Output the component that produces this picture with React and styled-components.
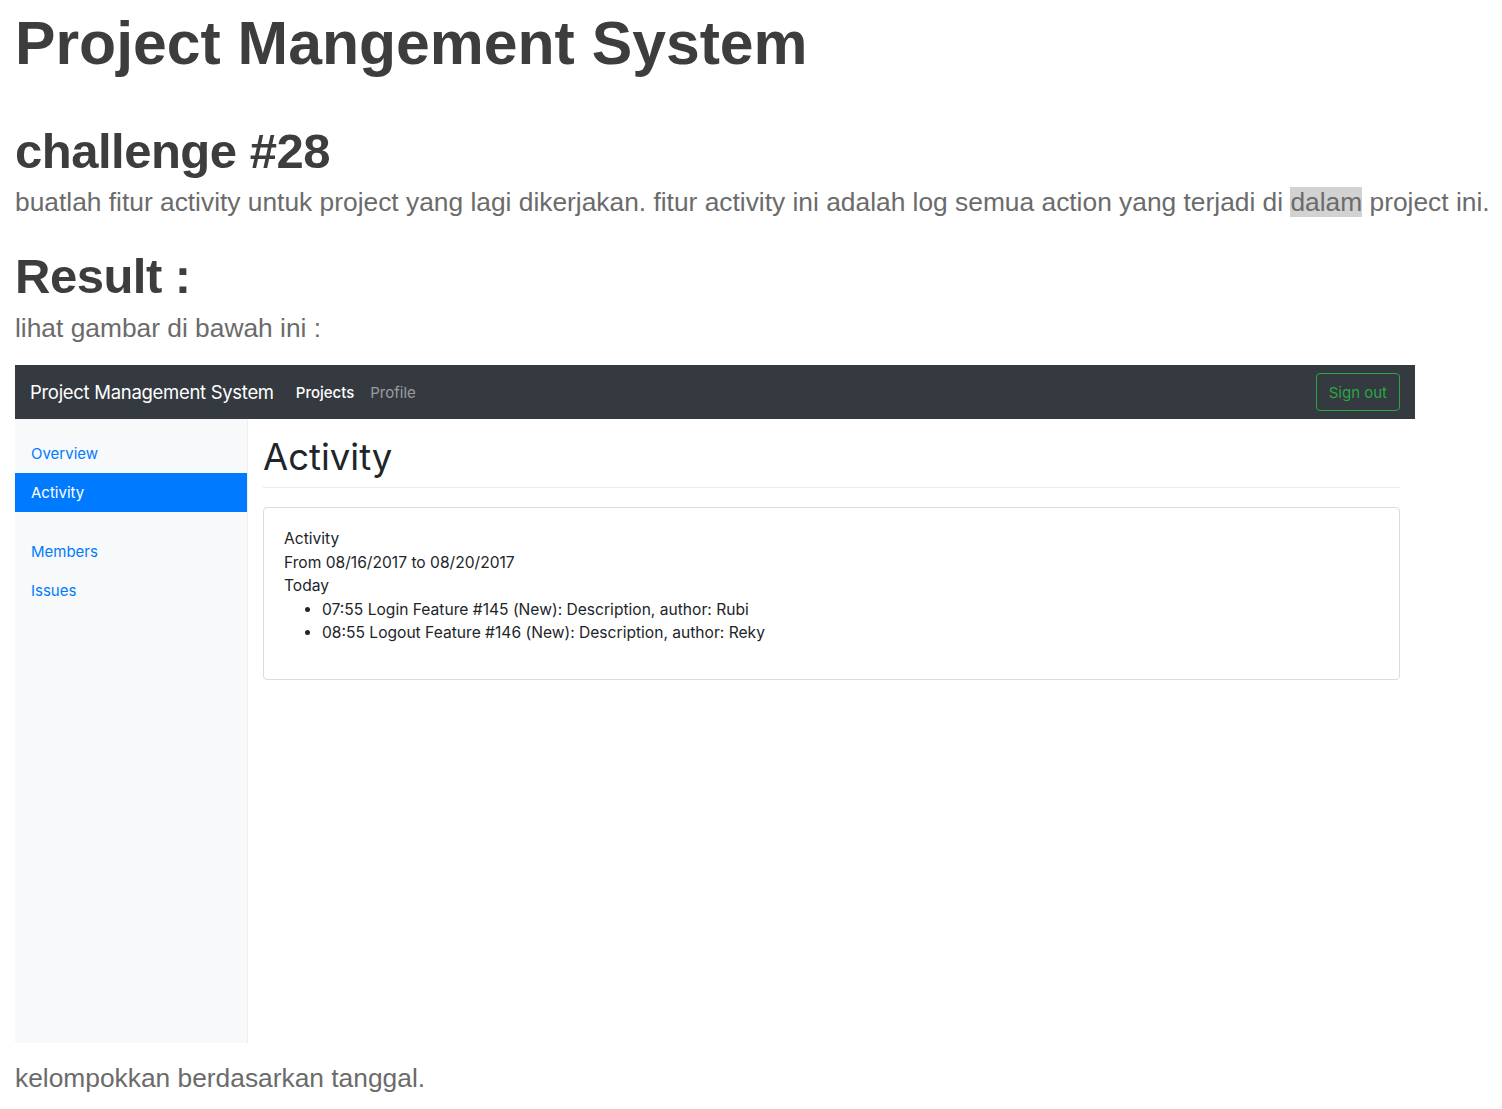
import React from "react";
import styled, { createGlobalStyle } from "styled-components";

const Global = createGlobalStyle`
  html, body {
    margin: 0;
    padding: 0;
    background: #fff;
  }
  body {
    font-family: "Liberation Sans", Arial, sans-serif;
  }
`;

const Page = styled.div`
  padding: 0 15px;
  width: 1502px;
  box-sizing: border-box;
`;

const Title = styled.h1`
  margin: 0;
  padding-top: 8px;
  font-size: 60.7px;
  line-height: 70px;
  font-weight: 700;
  color: #3d3d3d;
`;

const SubTitle = styled.h2`
  margin: ${(p) => p.$top || 0}px 0 0;
  font-size: 49px;
  line-height: 54px;
  font-weight: 700;
  color: #3d3d3d;
  letter-spacing: -0.5px;
`;

const Text = styled.p`
  margin: ${(p) => p.$top || 0}px 0 0;
  font-size: 26.35px;
  line-height: 32px;
  color: #6b6b6b;
  white-space: nowrap;
`;

const Mark = styled.span`
  background: #d2d2d2;
`;

const Shot = styled.div`
  margin-top: 21px;
  width: 1400px;
  font-family: Inter, "Noto Sans", sans-serif;
`;

const Navbar = styled.nav`
  height: 54px;
  background: #343a40;
  display: flex;
  align-items: center;
  padding: 0 15px;
  box-sizing: border-box;
`;

const Brand = styled.span`
  font-size: 18.5px;
  color: #fff;
  margin-right: 22px;
  letter-spacing: -0.3px;
`;

const NavLink = styled.span`
  font-size: 15px;
  color: ${(p) => (p.$active ? "#fff" : "rgba(255,255,255,0.5)")};
  font-weight: ${(p) => (p.$active ? 500 : 400)};
  margin-right: 16px;
`;

const SignOut = styled.button`
  margin-left: auto;
  height: 38px;
  padding: 0 12px;
  border: 1px solid #28a745;
  border-radius: 4px;
  background: transparent;
  color: #28a745;
  font-family: inherit;
  font-size: 15px;
`;

const Body = styled.div`
  display: flex;
  height: 624px;
`;

const Sidebar = styled.aside`
  width: 232px;
  background: #f8f9fa;
  border-right: 1px solid #eceeef;
  padding-top: 15px;
  flex-shrink: 0;
`;

const SideItem = styled.div`
  height: 39px;
  display: flex;
  align-items: center;
  padding: 0 16px;
  font-size: 15px;
  color: ${(p) => (p.$active ? "#fff" : "#007bff")};
  background: ${(p) => (p.$active ? "#007bff" : "transparent")};
  margin-top: ${(p) => p.$gap || 0}px;
`;

const Main = styled.main`
  flex: 1;
  padding: 14px 15px 0 15px;
`;

const PageTitle = styled.h1`
  margin: 0;
  font-size: 36.5px;
  line-height: 48px;
  font-weight: 400;
  color: #212529;
  padding-bottom: 6px;
  border-bottom: 1px solid #e9ecef;
`;

const Card = styled.div`
  margin-top: 19px;
  border: 1px solid #dcdcdc;
  border-radius: 4px;
  padding: 19px 20px 26px;
  height: 173px;
  box-sizing: border-box;
  font-size: 15.6px;
  line-height: 23.5px;
  color: #212529;
`;

const List = styled.ul`
  margin: 0;
  padding-left: 38px;
`;

const Footer = styled(Text)`
  margin-top: 19px;
`;

export default function App() {
  return (
    <>
      <Global />
      <Page>
        <Title>Project Mangement System</Title>
        <SubTitle $top={46}>challenge #28</SubTitle>
        <Text $top={8}>
          buatlah fitur activity untuk project yang lagi dikerjakan. fitur activity ini adalah log semua
          action yang terjadi di <Mark>dalam</Mark> project ini.
        </Text>
        <SubTitle $top={31}>Result :</SubTitle>
        <Text $top={9}>lihat gambar di bawah ini :</Text>
        <Shot>
          <Navbar>
            <Brand>Project Management System</Brand>
            <NavLink $active>Projects</NavLink>
            <NavLink>Profile</NavLink>
            <SignOut>Sign out</SignOut>
          </Navbar>
          <Body>
            <Sidebar>
              <SideItem>Overview</SideItem>
              <SideItem $active>Activity</SideItem>
              <SideItem $gap={20}>Members</SideItem>
              <SideItem>Issues</SideItem>
            </Sidebar>
            <Main>
              <PageTitle>Activity</PageTitle>
              <Card>
                <div>Activity</div>
                <div>From 08/16/2017 to 08/20/2017</div>
                <div>Today</div>
                <List>
                  <li>07:55 Login Feature #145 (New): Description, author: Rubi</li>
                  <li>08:55 Logout Feature #146 (New): Description, author: Reky</li>
                </List>
              </Card>
            </Main>
          </Body>
        </Shot>
        <Footer>kelompokkan berdasarkan tanggal.</Footer>
      </Page>
    </>
  );
}
